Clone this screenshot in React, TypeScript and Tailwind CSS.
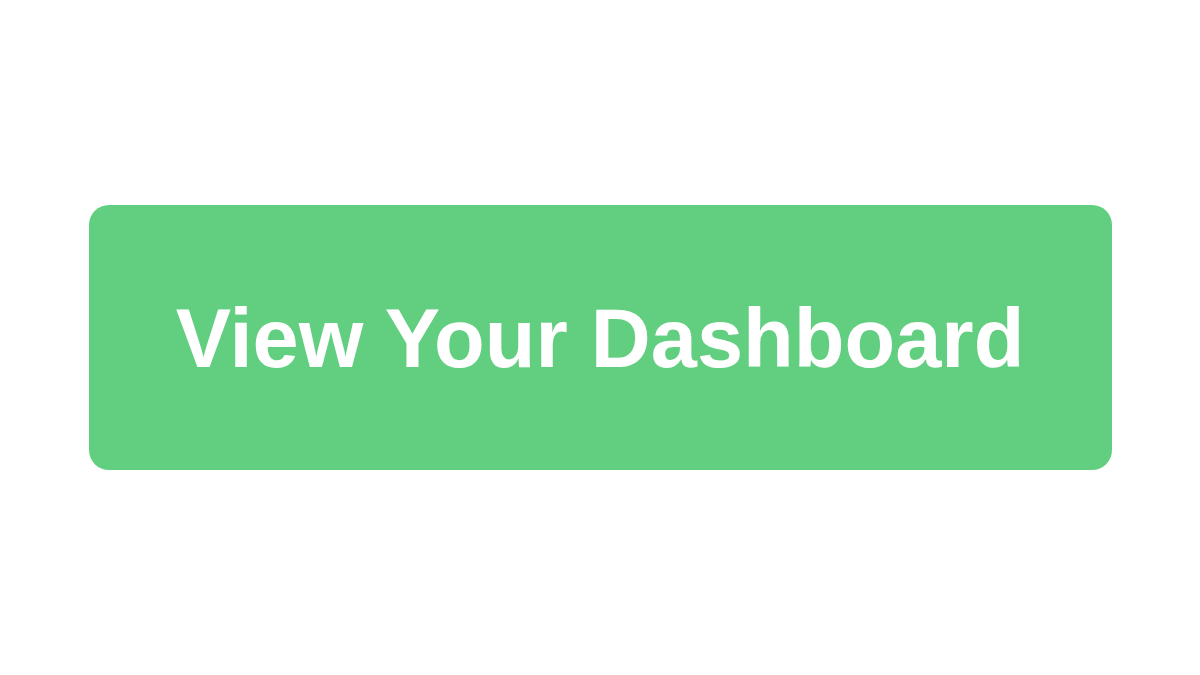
export default function App() {
  return (
    <div className="flex h-[675px] w-[1200px] items-center justify-center bg-white">
      <button
        className="flex h-[265px] w-[1023px] items-center justify-center rounded-[20px] bg-[#62cf80] pt-[3px] text-[83px] font-bold text-white"
        style={{ fontFamily: '"Liberation Sans", Arial, sans-serif' }}
      >
        View Your Dashboard
      </button>
    </div>
  );
}
